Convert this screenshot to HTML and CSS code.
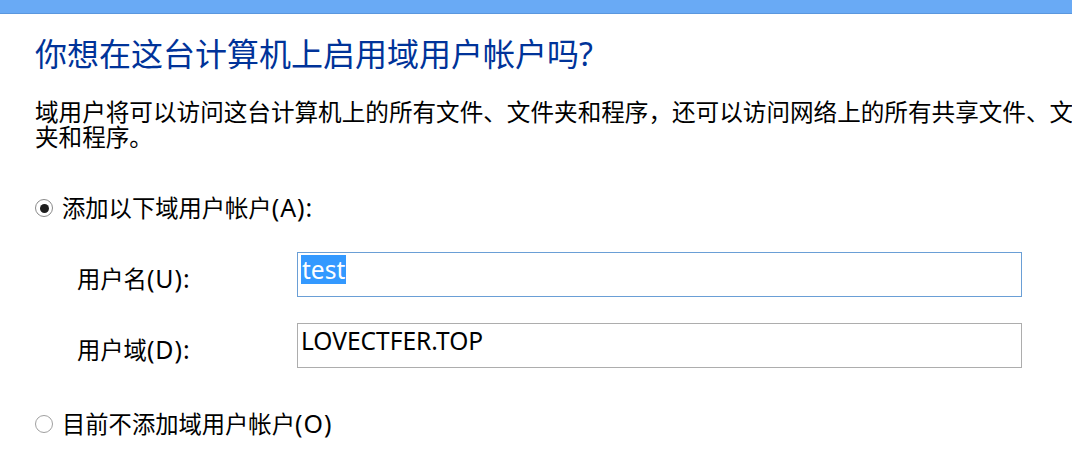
FILE: index.html
```html
<!DOCTYPE html>
<html lang="zh-CN">
<head>
<meta charset="utf-8">
<title>域用户帐户</title>
<link rel="stylesheet" href="styles.css">
</head>
<body>
<div class="topbar"></div>
<main class="content">
  <h1 class="title">你想在这台计算机上启用域用户帐户吗<span class="lat">?</span></h1>
  <p class="desc">域用户将可以访问这台计算机上的所有文件、文件夹和程序，还可以访问网络上的所有共享文件、文件<br>夹和程序。</p>
  <div class="option option-first">
    <span class="radio checked"></span>
    <span class="option-text">添加以下域用户帐户<span class="lat">(A):</span></span>
  </div>
  <div class="fields">
    <div class="label">用户名<span class="lat">(U):</span></div>
    <div class="field focused"><span class="sel">test</span></div>
    <div class="label">用户域<span class="lat">(D):</span></div>
    <div class="field"><span class="val">LOVECTFER.TOP</span></div>
  </div>
  <div class="option option-second">
    <span class="radio"></span>
    <span class="option-text">目前不添加域用户帐户<span class="lat">(O)</span></span>
  </div>
</main>
</body>
</html>
```
FILE: styles.css
```css
html, body {
  margin: 0;
  padding: 0;
}
body {
  width: 1072px;
  height: 466px;
  overflow: hidden;
  background: #ffffff;
  font-family: "Noto Sans", "Noto Sans CJK SC", sans-serif;
  color: #000000;
}
.topbar {
  height: 13px;
  background: #69aaf5;
  border-bottom: 1px solid #5a97de;
}
.content {
  padding-left: 35px;
}
.title {
  margin: 24px 0 0 0;
  font-weight: normal;
  font-size: 32px;
  line-height: 32px;
  color: #003399;
  white-space: nowrap;
}
.desc {
  margin: 30px 0 0 0;
  font-size: 23.6px;
  line-height: 25px;
  white-space: nowrap;
}
.option {
  display: flex;
  align-items: center;
  font-size: 23.3px;
  line-height: 25px;
  white-space: nowrap;
}
.lat {
  font-size: 1.07em;
  letter-spacing: 1px;
}
.title .lat {
  font-size: 1em;
  letter-spacing: 0;
}
.option-first {
  margin-top: 45px;
}
.option-second {
  margin-top: 43px;
}
.radio {
  box-sizing: border-box;
  width: 18px;
  height: 18px;
  border: 1px solid #8a8a8a;
  border-radius: 50%;
  background: #ffffff;
  display: flex;
  align-items: center;
  justify-content: center;
  margin-right: 9px;
  flex: none;
}
.radio.checked::after {
  content: "";
  width: 9px;
  height: 9px;
  border-radius: 50%;
  background: #1e1e1e;
}
.option-second .radio {
  border-color: #a0a0a0;
}
.fields {
  margin: 31px 0 0 42px;
  display: grid;
  grid-template-columns: 220px 725px;
  row-gap: 26px;
}
.label {
  font-size: 23.3px;
  line-height: 25px;
  padding-top: 14px;
  white-space: nowrap;
}
.field {
  box-sizing: border-box;
  height: 45px;
  border: 1px solid #adadad;
  padding: 2px 0 0 3px;
  font-size: 24.5px;
  line-height: 29px;
  white-space: nowrap;
  overflow: hidden;
}
.field.focused {
  border-color: #6a9fd6;
}
.sel, .val {
  display: inline-block;
  height: 29px;
  line-height: 29px;
  vertical-align: top;
}
.sel {
  background: #3399ff;
  color: #ffffff;
  padding: 0 1px;
}
```
